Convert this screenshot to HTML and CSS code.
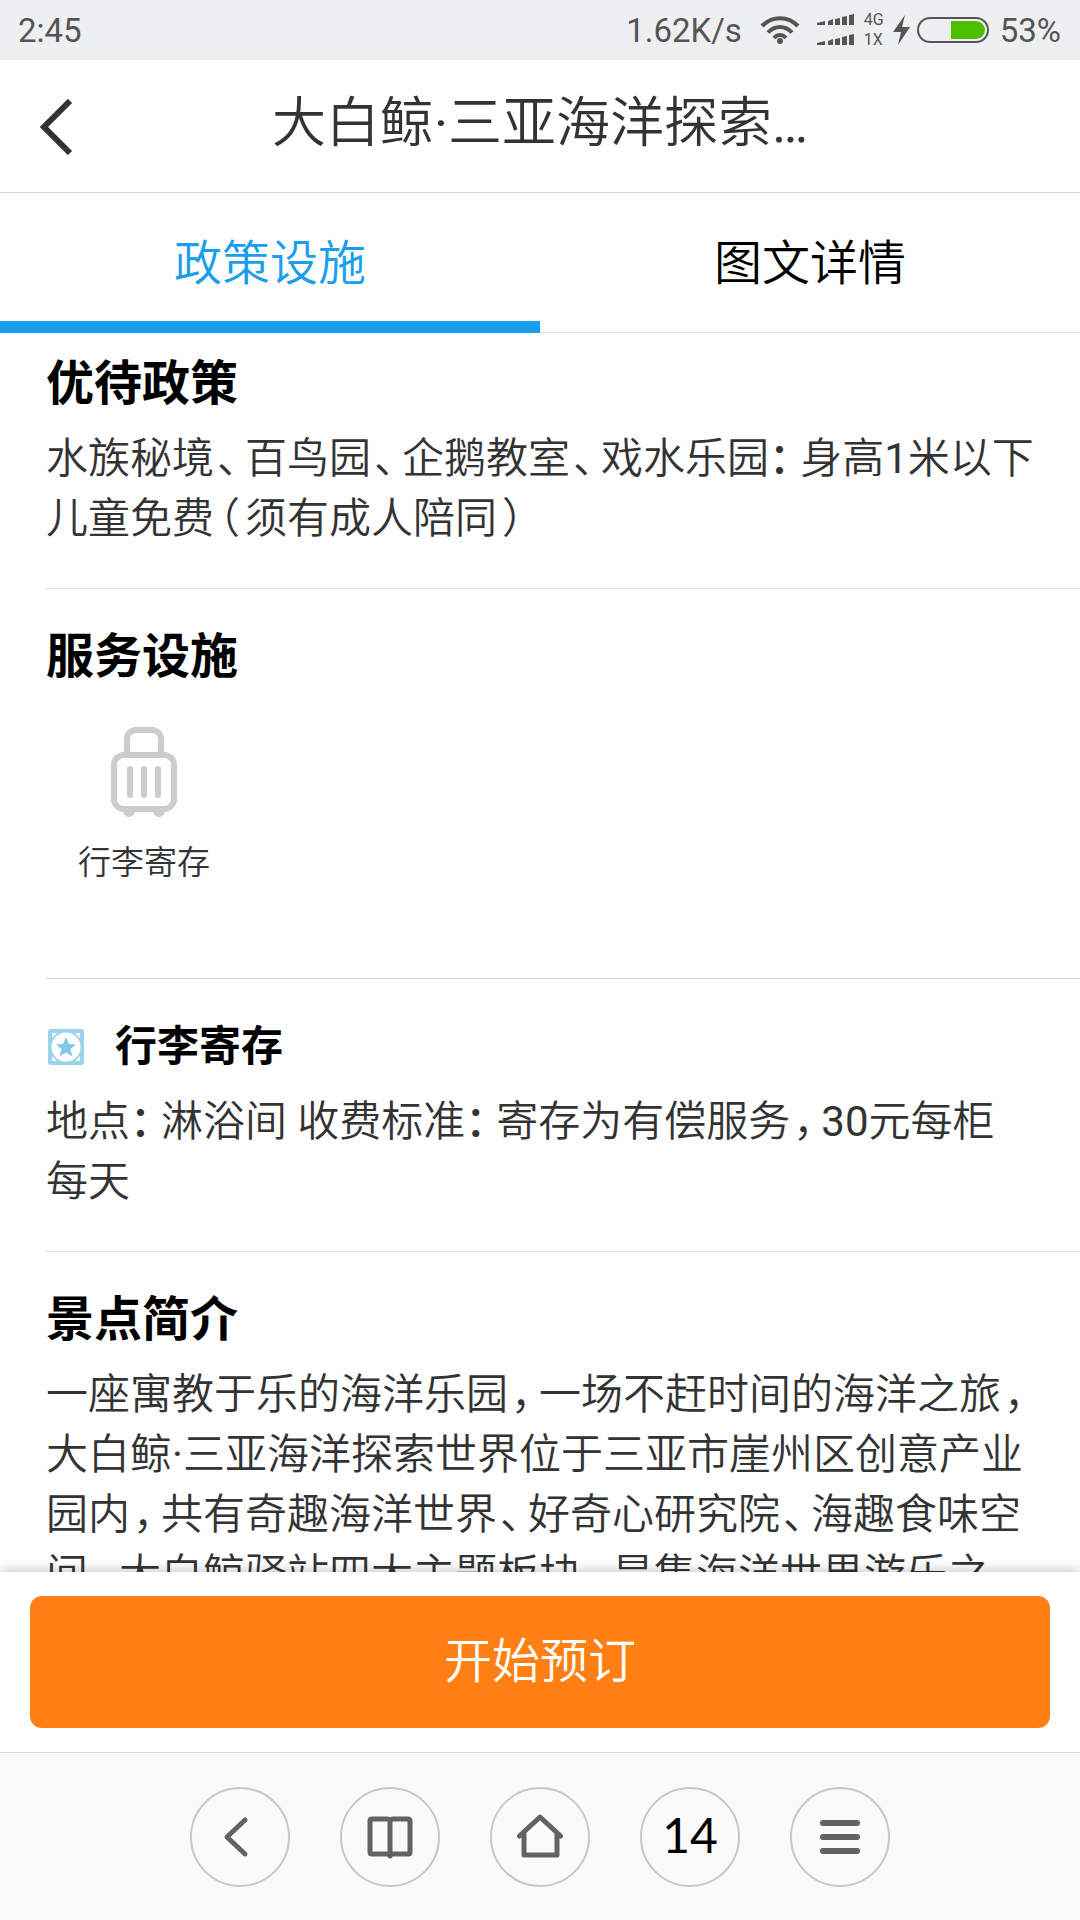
FILE: index.html
```html
<!DOCTYPE html>
<html lang="zh-CN">
<head>
<meta charset="utf-8">
<meta name="viewport" content="width=device-width">
<title>大白鲸·三亚海洋探索世界</title>
<link rel="stylesheet" href="styles.css">
</head>
<body>
<div class="status">
  <span>2:45</span>
  <div class="status-right">
    <span>1.62K/s</span>
    <svg class="wifi" width="40" height="30" viewBox="0 0 40 30" fill="none" stroke="#555" stroke-width="4">
      <path d="M2 11C12 .5 28 .5 38 11"/><path d="M8 17.500C15 10 25 10 32 17.500"/><path d="M14 23C17.500 19 22.500 19 26 23"/><circle cx="20" cy="26" r="3" fill="#555" stroke="none"/>
    </svg>
    <svg class="signal" width="38" height="32" viewBox="0 0 38 32" fill="#555">
      <path id="bars" d="M0 9l8-2v4H0zM11 7l5-2v6h-5zM18 5l5-1v7h-5zM25 3l5-1v9h-5zM32 1l5-1v11h-5z"/>
      <use href="#bars" y="20"/>
    </svg>
    <div class="net"><span>4G</span><span>1X</span></div>
    <svg class="bolt" width="18" height="30" viewBox="0 0 18 30" fill="#555"><path d="M12 0L0 17h8L5 30 17 12H9z"/></svg>
    <svg class="battery" width="72" height="26" viewBox="0 0 72 26"><rect x="1" y="1" width="70" height="24" rx="12" fill="none" stroke="#555" stroke-width="2"/><path d="M34 4h25a9 9 0 0 1 0 18H34z" fill="#4bc000"/></svg>
    <span>53%</span>
  </div>
</div>

<header class="header">
  <button class="back" aria-label="返回"><svg width="34" height="56" viewBox="0 0 34 56" fill="none" stroke="#333" stroke-width="6"><path d="M30 2L4 28l26 26"/></svg></button>
  <h1 class="title">大白鲸<span class="latin">·</span>三亚海洋探索<span class="latin">…</span></h1>
</header>

<nav class="tabs">
  <a class="tab tab-active" href="#policy">政策设施</a>
  <a class="tab" href="#detail">图文详情</a>
</nav>

<main class="content" id="policy">
  <section class="section first">
    <h2>优待政策</h2>
    <p>水族秘境<span class="comma">、</span>百鸟园<span class="comma">、</span>企鹅教室<span class="comma">、</span>戏水乐园<span class="colon">：</span>身高<span class="latin">1</span>米以下儿童免费<span class="paren">（</span>须有成人陪同<span class="paren">）</span></p>
  </section>
  <section class="section">
    <h2>服务设施</h2>
    <ul class="facilities">
      <li>
        <svg width="66" height="90" viewBox="0 0 66 90" fill="none" stroke="#ccc" stroke-width="6" stroke-linecap="round">
          <path d="M16 27V12a9 9 0 0 1 9-9h16a9 9 0 0 1 9 9v15"/><rect x="3" y="28" width="60" height="54" rx="10"/><path d="M19 42v26M33 42v26M47 42v26"/><path d="M12 84a6 6 0 0 0 12 0zM42 84a6 6 0 0 0 12 0z" fill="#ccc" stroke="none"/>
        </svg>
        <span>行李寄存</span>
      </li>
    </ul>
  </section>
  <section class="section">
    <h3><svg width="36" height="36" viewBox="0 0 36 36"><rect width="36" height="36" rx="3" fill="#9bd2ec"/><path d="M4 4h5L4 9zM32 4v5l-5-5zM4 32v-5l5 5zM32 32h-5l5-5z" fill="#fff"/><circle cx="18" cy="18" r="14.500" fill="#fff"/><path d="M18 8l3 7 7 .5-5.500 4.500 2 7.500L18 23.500l-6.500 4 2-7.500L8 15.500l7-.5z" fill="#83c8e8"/></svg>行李寄存</h3>
    <p>地点<span class="colon">：</span>淋浴间 收费标准<span class="colon">：</span>寄存为有偿服务<span class="comma">，</span><span class="latin">30</span>元每柜每天</p>
  </section>
  <section class="section">
    <h2>景点简介</h2>
    <p>一座寓教于乐的海洋乐园<span class="comma">，</span>一场不赶时间的海洋之旅<span class="comma">，</span>大白鲸<span class="latin">·</span>三亚海洋探索世界位于三亚市崖州区创意产业园内<span class="comma">，</span>共有奇趣海洋世界<span class="comma">、</span>好奇心研究院<span class="comma">、</span>海趣食味空间<span class="comma">、</span>大白鲸驿站四大主题板块<span class="comma">，</span>是集海洋世界游乐之</p>
  </section>
</main>

<div class="booking"><button class="book">开始预订</button></div>

<footer class="toolbar">
  <button aria-label="后退"><svg width="48" height="48" viewBox="0 0 48 48"><path d="M29 7L11 24l18 17"/></svg></button>
  <button aria-label="书签"><svg width="48" height="48" viewBox="0 0 48 48"><path d="M24 43V9M24 8q-1-2-3-2H6q-2 0-2 2v31q0 2 2 2h36q2 0 2-2V8q0-2-2-2H27q-2 0-3 2"/></svg></button>
  <button aria-label="主页"><svg width="48" height="48" viewBox="0 0 48 48"><path d="M3.500 23L24 4l20.500 19M8 21v21h33V21"/></svg></button>
  <button class="count" aria-label="窗口 14">14</button>
  <button aria-label="菜单"><svg class="menu" width="48" height="48" viewBox="0 0 48 48"><path d="M7 10h34M7 24h34M7 38h34"/></svg></button>
</footer>
</body>
</html>
```
FILE: styles.css
```css
* { box-sizing: border-box; }

body {
  margin: 0;
  height: 100vh;
  display: flex;
  flex-direction: column;
  background: #fefefe;
  color: #333;
  font-family: Roboto, "Noto Sans CJK SC", sans-serif;
  font-weight: 350;
}

button {
  padding: 0;
  border: 0;
  background: none;
  font: inherit;
  color: inherit;
}

svg { display: block; flex: none; }

/* Status bar */
.status {
  flex: none;
  height: 60px;
  padding: 0 19px 0 18px;
  display: flex;
  align-items: center;
  justify-content: space-between;
  background: #eeeff1;
  color: #555;
  font-size: 33px;
  font-weight: 400;
}
.status-right { display: flex; align-items: center; }
.wifi { margin-left: 18px; }
.signal { margin-left: 17px; }
.net {
  display: flex;
  flex-direction: column;
  margin-left: 9px;
  font-size: 16px;
  line-height: 20px;
}
.bolt { margin-left: 9px; }
.battery { margin: 0 11px 0 6px; }

/* Header */
.header {
  flex: none;
  height: 133px;
  padding: 0 40px;
  display: grid;
  grid-template-columns: 34px 1fr 34px;
  align-items: center;
  border-bottom: 1px solid #d8d8d8;
}
.title {
  margin: 0;
  padding-bottom: 4px;
  text-align: center;
  white-space: nowrap;
  font-size: 54px;
  line-height: 80px;
  font-weight: 350;
}
.back { padding-top: 2px; }

/* Tabs */
.tabs { flex: none; display: flex; }
.tab {
  flex: 1;
  height: 140px;
  padding-bottom: 8px;
  display: flex;
  align-items: center;
  justify-content: center;
  border-bottom: 1px solid #ddd;
  color: #000;
  font-size: 48px;
  text-decoration: none;
}
.tab-active {
  padding: 3px 0 0;
  border-bottom: 12px solid #1a9fec;
  color: #1a9fec;
}

/* Content */
.content { flex: 1; min-height: 0; overflow: hidden; }
.section {
  margin-left: 46px;
  padding: 38px 46px 39px 0;
  border-bottom: 1px solid #ddd;
}
.first { padding-top: 21px; }
h2, h3 {
  margin: 0 0 15px;
  color: #000;
  font-size: 48px;
  line-height: 60px;
  font-weight: 700;
}
h3 {
  display: flex;
  align-items: center;
  gap: 31px;
  padding-left: 2px;
  font-size: 42px;
}
p { margin: 0; font-size: 42px; line-height: 60px; }

/* Digits and dots take the regular Roboto face */
.latin { font-weight: 400; }

.comma, .colon, .paren { font-feature-settings: "halt"; }
.comma { padding: 0 7px 0 3px; }
.colon { padding-right: 10px; font-weight: 500; }
.paren { padding: 0 5px; }

.facilities {
  display: flex;
  margin: 0;
  padding: 25px 0 53px;
  list-style: none;
}
.facilities li {
  width: 196px;
  display: flex;
  flex-direction: column;
  align-items: center;
  gap: 23px;
  font-size: 33px;
  line-height: 46px;
}

/* Booking bar */
.booking {
  flex: none;
  position: relative;
  padding: 24px 30px;
  background: #fff;
  box-shadow: 0 -2px 10px rgba(0, 0, 0, .2);
}
.book {
  display: block;
  width: 100%;
  height: 132px;
  padding-bottom: 11px;
  border-radius: 12px;
  background: #ff7f15;
  color: #fff;
  font-size: 48px;
}

/* Browser toolbar */
.toolbar {
  flex: none;
  position: relative;
  height: 168px;
  display: flex;
  align-items: center;
  justify-content: center;
  gap: 50px;
  border-top: 1px solid #d8d8d8;
  background: #fafafa;
}
.toolbar button {
  width: 100px;
  height: 100px;
  display: flex;
  align-items: center;
  justify-content: center;
  border: 2px solid #c8c8c8;
  border-radius: 50%;
}
.toolbar svg {
  fill: none;
  stroke: #626262;
  stroke-width: 5;
  stroke-linecap: round;
  stroke-linejoin: round;
}
.toolbar .menu { stroke-width: 6; }
.toolbar .count {
  padding-bottom: 4px;
  color: #000;
  font-family: Lato, sans-serif;
  font-size: 48px;
  font-weight: 400;
}
```
